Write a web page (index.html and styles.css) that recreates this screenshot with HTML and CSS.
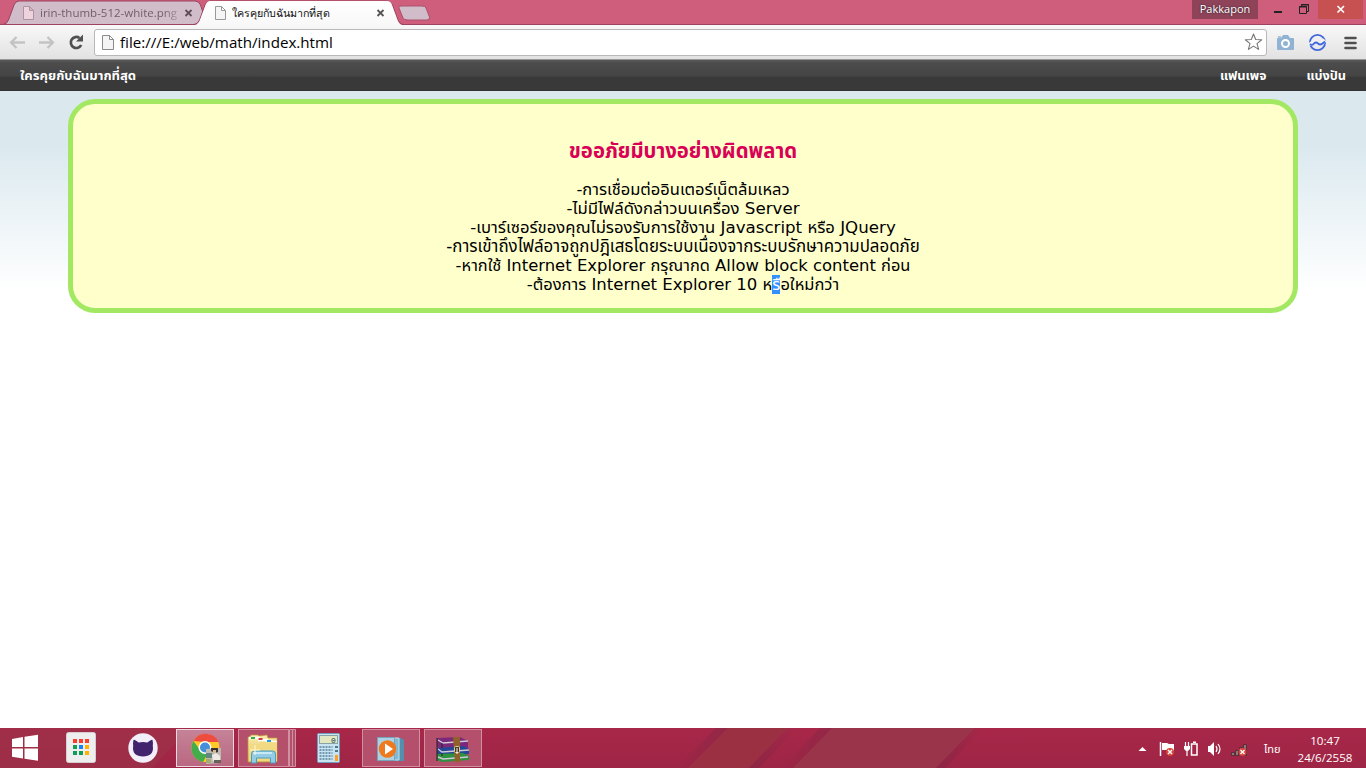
FILE: index.html
```html
<!DOCTYPE html>
<html lang="th">
<head>
<meta charset="utf-8">
<title>ใครคุยกับฉันมากที่สุด</title>
<link rel="stylesheet" href="styles.css">
</head>
<body>
<div class="screen">
  <header class="titlebar">
    <svg class="tab-shapes" width="440" height="25" viewBox="0 0 440 25">
      <defs><linearGradient id="tabfill" x2="0" y2="1"><stop offset="0" stop-color="#fff"/><stop offset="1" stop-color="#f8f8f8"/></linearGradient></defs>
      <path d="M0 24.5H3Q7 24 8.500 20L14 5Q15.500 1 19 1H195Q199 1 200.500 5L207 24.500Z" fill="#d1bcc9" stroke="#9d4260"/>
      <path d="M399 8Q398 6 401 6H422Q425 6 426 8L429.500 17Q430 20 427 20H408Q404 20 403 18Z" fill="#d1bcc9" stroke="#ad5070"/>
      <path d="M0 24.500H194Q198 24 199.500 20L205 5Q206.500 1 210 1H387Q391 1 392.500 5L398 20Q399.500 24 403 24.500H440" fill="none" stroke="#9d4260"/>
      <path d="M195 25Q199 24 200 20L205.500 5Q207 1 210 1H387Q391 1 392 5L397.500 20Q399 24 402 25Z" fill="url(#tabfill)"/>
      <g stroke-width="1"><path d="M23.500 6.500h6l4 4v9h-10zM29.500 6.500v4h4" fill="#eed3dc" stroke="#ae929f"/><path d="M215.500 6.500h6l4 4v9h-10zM221.500 6.500v4h4" fill="#f5f5f5" stroke="#999"/></g>
      <path d="M185.500 10l6 6m0-6l-6 6" stroke="#604c56" stroke-width="1.800"/><path d="M377.500 10l6 6m0-6l-6 6" stroke="#555" stroke-width="1.800"/>
    </svg>
    <div class="tab-text old">irin-thumb-512-white.png</div>
    <div class="tab-text current">ใครคุยกับฉันมากที่สุด</div>
    <div class="user">Pakkapon</div>
    <svg class="window-icons" width="108" height="20" viewBox="0 0 108 20"><rect x="60" width="45" height="19" fill="#c75050"/><path d="M16 12h8" stroke="#222" stroke-width="2"/><path d="M41.500 6.500h7v7h-7zM41 7h8M43.500 6V4.500h7v7H49M43 5h8" fill="none" stroke="#222"/><path d="M79.500 6l6.500 6.500m0-6.500l-6.500 6.500" stroke="#fff" stroke-width="1.700"/></svg>
  </header>
  <div class="toolbar">
    <svg class="nav-icons" width="94" height="34" viewBox="0 25 94 34"><g fill="none" stroke="#c3c3c3" stroke-width="2.300"><path d="M25 42.500H11M16.500 37L11 42.500l5.500 5.500"/><path d="M39 42.500h14M47.500 37l5.500 5.500-5.500 5.500"/></g><path d="M79.500 38A5.500 5.500 0 1 0 81.200 45" fill="none" stroke="#505050" stroke-width="2.700"/><path d="M76 41.500h7v-7z" fill="#505050"/></svg>
    <div class="address"><svg width="25" height="25" viewBox="0 0 25 25"><path d="M7.500 5.500h7l4 4v10h-11zM14.500 5.500v4h4" fill="#f5f5f5" stroke="#8b8b8b"/></svg><span class="url">file:///E:/web/math/index.html</span><svg class="star" width="22" height="23" viewBox="0 0 22 23"><path d="M10.500 4l2.200 5.500 6 .3-4.700 3.800 1.600 5.800-5.100-3.300-5.100 3.300 1.600-5.800-4.700-3.800 6-.3z" fill="#fff" stroke="#777" stroke-width="1.100" stroke-linejoin="round"/></svg></div>
    <svg class="extensions" width="99" height="34" viewBox="1267 25 99 34"><path d="M1278 38h3l2-3h5l2 3h3q1 0 1 1v10q0 1-1 1h-15q-1 0-1-1V39q0-1 1-1" fill="#90b3d4"/><path d="M1278 37h3" stroke="#7195b5"/><circle cx="1285.500" cy="43.500" r="3.500" fill="#90b3d4" stroke="#fff" stroke-width="2"/><circle cx="1317.500" cy="42.500" r="7.600" fill="none" stroke="#4169dc" stroke-width="1.900"/><path d="M1309 43q2 2 4 0 2.500-2.500 4.500 0t4.500 0l3-3" fill="none" stroke="#f4f4f4" stroke-width="4"/><path d="M1310 44q2 2 4-.5 2-2 4 0t4.500 0l2.500-2" fill="none" stroke="#4169dc" stroke-width="1.900"/><path d="M1345.500 38h10M1345.500 43h10M1345.500 48h10" stroke="#505050" stroke-width="2.600" stroke-linecap="round"/></svg>
  </div>
  <nav class="site-nav"><b class="brand">ใครคุยกับฉันมากที่สุด</b><b class="fan">แฟนเพจ</b><b class="share">แบ่งปัน</b></nav>
  <main class="page">
    <section class="card">
      <h1>ขออภัยมีบางอย่างผิดพลาด</h1>
      <p class="l1">-การเชื่อมต่ออินเตอร์เน็ตล้มเหลว</p>
      <p class="l2">-ไม่มีไฟล์ดังกล่าวบนเครื่อง Server</p>
      <p class="l3">-เบาร์เซอร์ของคุณไม่รองรับการใช้งาน Javascript หรือ JQuery</p>
      <p class="l4">-การเข้าถึงไฟล์อาจถูกปฎิเสธโดยระบบเนื่องจากระบบรักษาความปลอดภัย</p>
      <p class="l5">-หากใช้ Internet Explorer กรุณากด Allow block content ก่อน</p>
      <p class="l6">-ต้องการ Internet Explorer 10 ห<span class="selected">รื</span>อใหม่กว่า</p>
    </section>
  </main>
  <footer class="taskbar">
    <svg class="apps" width="1130" height="40" viewBox="0 728 1130 40">
      <defs>
        <linearGradient id="edge"><stop offset="0" stop-color="#762743" stop-opacity="0"/><stop offset="1" stop-color="#762743" stop-opacity=".45"/></linearGradient>
        <linearGradient id="edgeRight"><stop offset="0" stop-color="#762743" stop-opacity=".45"/><stop offset="1" stop-color="#762743" stop-opacity="0"/></linearGradient>
        <linearGradient id="active" x2="0" y2="1"><stop stop-color="#c58398"/><stop offset="1" stop-color="#b96880"/></linearGradient>
        <linearGradient id="folder" x2="0" y2="1"><stop stop-color="#f8eaa5"/><stop offset="1" stop-color="#e3c568"/></linearGradient>
      </defs>
      <path d="M0 728h190l-38 40H0z" fill="#9c3249" opacity=".7"/>
      <path d="M716 728h12l-40 40h-12z" fill="url(#edge)"/><path d="M728 728h60l-39 40h-61z" fill="#9c3043"/><path d="M788 728h10l-39 40h-10z" fill="url(#edgeRight)"/>
      <path d="M820 728h12l-39 40h-12z" fill="url(#edge)"/><path d="M832 728h143l-39 40H793z" fill="#9a344a"/><path d="M975 728h9l-39 40h-9z" fill="url(#edgeRight)"/>
      <g fill="#fff"><path d="M12 739l11-2v10H12zM24.500 736.700l13.500-2V747H24.500zM12 748.500h11v10l-11-1.800zM24.500 748.500H38v12.200l-13.500-1.900z"/></g>
      <rect x="66.500" y="732.500" width="29" height="30" rx="2" fill="#eee" stroke="#d5cdd0"/>
      <g><path d="M73 739h4v4h-4zM79 739h4v4h-4zM85 739h4v4h-4z" fill="#f93e2f"/><path d="M73 745h4v4h-4zM73 751h4v4h-4zM79 751h4v4h-4z" fill="#0f9d58"/><path d="M79 745h4v4h-4z" fill="#1686ed"/><path d="M85 745h4v4h-4zM85 751h4v4h-4z" fill="#ffb300"/></g>
      <circle cx="143" cy="748" r="14.700" fill="#f2effa"/><path d="M133.500 740q.7-1 5 2.500 4.500-1 9 0 4.300-3.500 5-2.500.8 3 .3 6c1.200 7-3 10.500-9.800 10.500s-11-3.500-9.800-10.500q-.5-3 .3-6" fill="#42246d"/>
      <rect x="176.500" y="729.500" width="57" height="37" fill="url(#active)" stroke="#edd9df"/>
      <circle cx="205.500" cy="748" r="14" fill="#ffc927"/><path d="M193.400 741A14 14 0 0 1 218.500 742H205z" fill="#ed4c3f"/><path d="M193.400 741A14 14 0 0 0 203 762l5-9-8-3z" fill="#43ac4b"/><circle cx="205" cy="747.500" r="6.500" fill="#fff"/><circle cx="205" cy="747.500" r="5" fill="#448fda"/>
      <path d="M206 749l15-1v15l-15 1z" fill="#bdbab4"/><path d="M211 748h7v4l-3 1-4-2z" fill="#39322e"/><path d="M213 750h3v3h-3z" fill="#d6b695"/><path d="M206 753h6v5h-6z" fill="#668681"/><path d="M212 755l4-2 4 3v5h-7z" fill="#edeae6"/><path d="M206 759h5v4h-5z" fill="#a5ac71"/><path d="M214 760h7v3h-7z" fill="#66615c"/>
      <g fill="#b4506b" stroke="#cf91a2"><path d="M292.500 729.500h3v37h-3zM289.500 729.500h3v37h-3z"/><rect x="238.500" y="729.500" width="50" height="37"/></g>
      <path d="M248 737h2l1-2h7l1 1 8-1 1 3h9v24h-29z" fill="url(#folder)" stroke="#bd983e" stroke-width=".7"/><path d="M249 738h10v2h8v2h10" fill="none" stroke="#fff" stroke-width="2.300"/><path d="M251 738h4" stroke="#31af42" stroke-width="2"/><path d="M258.500 739h4" stroke="#d73b38" stroke-width="2"/><path d="M267 741h4" stroke="#299be1" stroke-width="2"/><path d="M249 744h10l2-2h16v19h-28z" fill="#f2d983" opacity=".9"/><path d="M251.500 763v-9q0-3 3-3h18q3 0 3 3v9h-5v-5h-14v5z" fill="#93cce4" stroke="#4c9ebd"/><path d="M253 753h19" stroke="#d9f5fc" stroke-width="1.500"/><path d="M255 745v10m-5-5h10" stroke="#fff7d3"/>
      <rect x="317.500" y="733.500" width="22" height="29" rx="1" fill="#c8e4f3" stroke="#719fba"/><rect x="319.500" y="735.500" width="18" height="8" fill="#e1e8c1" stroke="#88a2a6"/><text x="331" y="743" font-family="Liberation Mono" font-size="8" fill="#183750">0</text><path d="M319.500 747h13M319.500 750h13M319.500 753h13M319.500 756h13M319.500 759h13" stroke="#7399ad" stroke-width="2" stroke-dasharray="2 1"/><path d="M335 747h3m-3 4h3" stroke="#51788a" stroke-width="2"/><path d="M335 755h3v6h-3z" fill="#ff9f28"/>
      <g fill="#b4506b" stroke="#cf91a2"><rect x="362.500" y="729.500" width="57" height="37"/><rect x="424.500" y="729.500" width="57" height="37"/></g>
      <path d="M381 738h20l3 2v21h-19z" fill="#568eae"/><path d="M379 738h20v22h-20z" fill="#83b9d2" stroke="#bee1ef"/><path d="M377.500 737.500h17v23h-17z" fill="#add1e1" stroke="#73a6be"/><circle cx="387.500" cy="749" r="8.700" fill="#ee791e"/><path d="M385 743.500l8 5.500-8 5.500z" fill="#fff"/>
      <path d="M437 738l23-1 8 4v7l-26 2-5-3z" fill="#7c287c"/><path d="M437 748l26-2 6 3v5l-27 3-5-3z" fill="#244797"/><path d="M437 754l26-1 6 3v4l-27 2-5-2z" fill="#2d9140"/><path d="M438 740l5 3 25-2M438 749l4 3 27-2M438 757l5 2 25-2" fill="none" stroke="#cecad5" stroke-width="1.400"/><path d="M437 738v23M442 743v5M442 753v3" stroke="#232126"/><path d="M453 737h7v25h-5z" fill="#926029"/><rect x="454.500" y="746.500" width="5" height="6" rx="1" fill="#4a3520" stroke="#ddd1a2"/><path d="M457 748v6" stroke="#fff"/>
    </svg>
    <svg class="tray-icons" width="118" height="40" viewBox="1130 728 118 40"><path d="M1138.500 751l4-4 4 4z" fill="#fff"/><path d="M1160.500 742v14" stroke="#fff" stroke-width="1.500"/><path d="M1162 743h5l2 1h5v7h-5l-2-1h-5z" fill="#fff"/><circle cx="1170" cy="752" r="4" fill="#d84538"/><path d="M1168 750l4 4m0-4l-4 4" stroke="#fff" stroke-width="1.400"/><path d="M1185.500 742v4m3-4v4M1187 750v6" fill="none" stroke="#fff" stroke-width="1.200"/><path d="M1184 746h6v3l-2 2h-2l-2-2z" fill="#fff"/><path d="M1191.500 744h5.500v11h-5.500zM1193 742.300h3" fill="none" stroke="#fff" stroke-width="1.500"/><path d="M1208 746h2l4-4v14l-4-4h-2z" fill="#fff"/><path d="M1216 746q2 3 0 6m2-8q4 5 0 10" fill="none" stroke="#fff" stroke-width="1.200"/><g fill="#8b787a" stroke="#4e2631" stroke-width=".8"><path d="M1231.500 752.500h3v3h-3zM1235.500 750.500h3v5h-3zM1239.500 747.500h3v8h-3zM1243.500 744.500h3v11h-3z"/></g><circle cx="1242.500" cy="752" r="4" fill="#d84538"/><path d="M1240.500 750l4 4m0-4l-4 4" stroke="#fff" stroke-width="1.400"/></svg>
    <span class="language">ไทย</span><div class="clock"><span>10:47</span><span>24/6/2558</span></div>
  </footer>
</div>
</body>
</html>
```
FILE: styles.css
```css
* { box-sizing: border-box; }
body { margin: 0; background: #fff; color: #000; font-family: "DejaVu Sans", "Noto Sans Thai", Tahoma, sans-serif; }
svg { display: block; flex-shrink: 0; }
.screen { width: 1366px; height: 768px; display: grid; grid-template-rows: 25px 35px 31px 637px 40px; overflow: hidden; white-space: nowrap; }
.titlebar { position: relative; display: flex; background: #ce5e7b; border-bottom: 1px solid #9d4260; }
.tab-shapes { margin-right: 752px; }
.tab-text { position: absolute; top: 5px; height: 16px; line-height: 16px; font-family: "Open Sans", sans-serif; }
.old { left: 40px; font-size: 11.5px; color: #735d69; mask-image: linear-gradient(90deg, #000 90%, #0006); }
.current { left: 232px; font-size: 10.7px; color: #111; }
.user { width: 66px; height: 19px; background: #8e4359; color: #fff; font: 11px/18px "Open Sans", sans-serif; text-align: center; text-shadow: 0 0 2px #222; }
.toolbar { display: flex; background: linear-gradient(#f8f8f8, #e2e2e2); border-bottom: 1px solid #999; }
.address { width: 1173px; height: 27px; margin-top: 4px; display: flex; border: 1px solid #b8b8b8; border-radius: 3px; background: #fff; }
.url { font: 15.15px/25px "Open Sans", sans-serif; }
.star { margin: 0 1px 0 auto; }
.site-nav { display: flex; align-items: center; padding: 0 20px; color: #fff; line-height: 18px; background: linear-gradient(#4d4d4d, #444 50%, #393939 55%, #393939); border-top: 2px solid #555; border-bottom: 1px solid #333; }
.brand { font-size: 13.1px; }
.fan { font-size: 12.900px; margin-left: auto; margin-right: 40px; }
.share { font-size: 12.700px; }
.page { background: linear-gradient(#dbe9ef 0, #dbe9ef 55px, #fff 200px); padding: 8px 68px; }
.card { height: 214px; background: #ffc; border: 5px solid #a3e863; border-radius: 27px; padding-top: 35px; text-align: center; }
h1 { margin: 0 0 17px; font-size: 20.300px; line-height: 24px; color: #d90055; }
p { margin: 0; line-height: 19px; height: 19px; }
.l1 { font-size: 16.500px; }
.l2 { font-size: 16.700px; }
.l3 { font-size: 16.670px; }
.l4 { font-size: 16.900px; }
.l5 { font-size: 16.430px; }
.l6 { font-size: 16.530px; }
.selected { color: #fff; background: linear-gradient(#3390ff, #3390ff) 0 50% / 100% 19px no-repeat; }
.taskbar { display: flex; background: linear-gradient(#a82749, #9e2545); color: #fff; font-family: "Open Sans", "Noto Sans Thai", sans-serif; }
.language { margin-left: 16px; width: 34px; font-size: 11px; line-height: 42px; }
.clock { width: 54px; display: flex; flex-direction: column; align-items: center; font-size: 11.600px; line-height: 17px; padding-top: 4px; }
```
